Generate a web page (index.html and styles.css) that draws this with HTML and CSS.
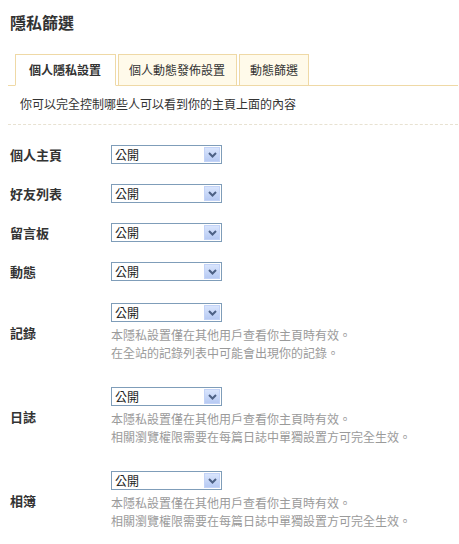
FILE: index.html
```html
<!DOCTYPE html>
<html lang="zh-Hant">
<head>
<meta charset="utf-8">
<title>隱私篩選</title>
<link rel="stylesheet" href="styles.css">
</head>
<body>
<div class="page">
  <h1 class="title">隱私篩選</h1>
  <ul class="tabs">
    <li class="tab tab-1 active">個人隱私設置</li>
    <li class="tab tab-2">個人動態發佈設置</li>
    <li class="tab tab-3">動態篩選</li>
  </ul>
  <p class="intro">你可以完全控制哪些人可以看到你的主頁上面的內容</p>
  <table class="form">
    <tr>
      <th>個人主頁</th>
      <td><div class="select"><span class="value">公開</span><span class="arrow"><svg width="9" height="6" viewBox="0 0 9 6"><path d="M1 1 L4.5 4.5 L8 1" fill="none" stroke="#4d6185" stroke-width="2"/></svg></span></div></td>
    </tr>
    <tr>
      <th>好友列表</th>
      <td><div class="select"><span class="value">公開</span><span class="arrow"><svg width="9" height="6" viewBox="0 0 9 6"><path d="M1 1 L4.5 4.5 L8 1" fill="none" stroke="#4d6185" stroke-width="2"/></svg></span></div></td>
    </tr>
    <tr>
      <th>留言板</th>
      <td><div class="select"><span class="value">公開</span><span class="arrow"><svg width="9" height="6" viewBox="0 0 9 6"><path d="M1 1 L4.5 4.5 L8 1" fill="none" stroke="#4d6185" stroke-width="2"/></svg></span></div></td>
    </tr>
    <tr>
      <th>動態</th>
      <td><div class="select"><span class="value">公開</span><span class="arrow"><svg width="9" height="6" viewBox="0 0 9 6"><path d="M1 1 L4.5 4.5 L8 1" fill="none" stroke="#4d6185" stroke-width="2"/></svg></span></div></td>
    </tr>
    <tr class="has-help">
      <th>記錄</th>
      <td><div class="select"><span class="value">公開</span><span class="arrow"><svg width="9" height="6" viewBox="0 0 9 6"><path d="M1 1 L4.5 4.5 L8 1" fill="none" stroke="#4d6185" stroke-width="2"/></svg></span></div>
        <div class="help">本隱私設置僅在其他用戶查看你主頁時有效。<br>在全站的記錄列表中可能會出現你的記錄。</div></td>
    </tr>
    <tr class="has-help">
      <th>日誌</th>
      <td><div class="select"><span class="value">公開</span><span class="arrow"><svg width="9" height="6" viewBox="0 0 9 6"><path d="M1 1 L4.5 4.5 L8 1" fill="none" stroke="#4d6185" stroke-width="2"/></svg></span></div>
        <div class="help">本隱私設置僅在其他用戶查看你主頁時有效。<br>相關瀏覽權限需要在每篇日誌中單獨設置方可完全生效。</div></td>
    </tr>
    <tr class="has-help">
      <th>相簿</th>
      <td><div class="select"><span class="value">公開</span><span class="arrow"><svg width="9" height="6" viewBox="0 0 9 6"><path d="M1 1 L4.5 4.5 L8 1" fill="none" stroke="#4d6185" stroke-width="2"/></svg></span></div>
        <div class="help">本隱私設置僅在其他用戶查看你主頁時有效。<br>相關瀏覽權限需要在每篇日誌中單獨設置方可完全生效。</div></td>
    </tr>
  </table>
</div>
</body>
</html>
```
FILE: styles.css
```css
html, body {
  margin: 0;
  padding: 0;
  background: #fff;
}
body {
  font-family: "Noto Sans CJK TC", "Noto Sans", sans-serif;
  color: #333;
  font-size: 12px;
}
.page {
  padding: 0 1px 0 8px;
}
.title {
  margin: 0;
  padding: 12px 0 0 2px;
  font-size: 16px;
  line-height: 20px;
  font-weight: bold;
  color: #333;
}
.tabs {
  list-style: none;
  margin: 22px 0 0 0;
  padding: 0 0 0 7px;
  display: flex;
  gap: 2px;
  border-bottom: 1px solid #efd9a6;
}
.tab {
  height: 30px;
  line-height: 30px;
  font-size: 12px;
  color: #333;
  background: #fffaea;
  border: 1px solid #efd9a6;
  margin-bottom: -1px;
  white-space: nowrap;
}
.tab-1 { padding: 0 14px 0 13px; }
.tab-2 { padding: 0 11px 0 10px; }
.tab-3 { padding: 0 10px; }
.tab.active {
  background: #fff;
  font-weight: bold;
  border-bottom-color: #fff;
}
.intro {
  margin: 0;
  padding: 9px 0 11px 12px;
  line-height: 18px;
  font-size: 12px;
  color: #333;
  border-bottom: 1px dashed #e8e2d2;
}
.form {
  margin: 10px 0 0 2px;
  border-collapse: collapse;
  border-spacing: 0;
}
.form th {
  width: 101px;
  padding: 0;
  text-align: left;
  vertical-align: middle;
  font-size: 13px;
  line-height: 18px;
  font-weight: bold;
  color: #333;
}
.form td {
  padding: 10px 0;
  vertical-align: top;
}
.form .has-help td {
  padding: 12px 0 13px;
}
.select {
  box-sizing: border-box;
  width: 111px;
  height: 19px;
  border: 1px solid #7f9db9;
  background: #fff;
  display: flex;
  align-items: center;
  justify-content: space-between;
}
.select .value {
  padding-left: 3px;
  font-size: 12px;
  line-height: 17px;
  color: #222;
}
.select .arrow {
  box-sizing: border-box;
  width: 16px;
  height: 15px;
  margin: 1px;
  background: linear-gradient(#d9e5fd, #b7caf3);
  border: 1px solid #c3d3f7;
  display: flex;
  align-items: center;
  justify-content: center;
}
.help {
  margin-top: 4px;
  font-size: 12px;
  line-height: 18px;
  color: #9a9a9a;
  white-space: nowrap;
}
```
